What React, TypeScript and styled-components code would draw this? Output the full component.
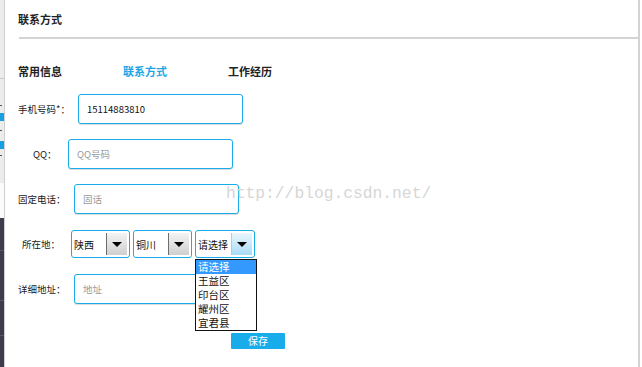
import styled, { createGlobalStyle } from "styled-components";

const GlobalStyle = createGlobalStyle`
  html, body {
    margin: 0;
    padding: 0;
    background: #ffffff;
  }
  body {
    font-family: "Noto Sans CJK SC", "Noto Sans", sans-serif;
    color: #222;
  }
`;

const Page = styled.div`
  width: 642px;
  height: 367px;
  display: flex;
  overflow: hidden;
  position: relative;
`;

const SideStrip = styled.div`
  width: 4px;
  display: flex;
  flex-direction: column;
  border-right: 1px solid #cfcfcf;
  overflow: hidden;
`;

const StripPart = styled.div<{ $h: number; $bg: string }>`
  height: ${p => p.$h}px;
  flex: none;
  background: ${p => p.$bg};
  position: relative;
`;

const StripMark = styled.div<{ $top: number; $blue?: boolean }>`
  position: absolute;
  left: 0;
  top: ${p => p.$top}px;
  width: ${p => (p.$blue ? 4 : 2)}px;
  height: ${p => (p.$blue ? 8 : 1)}px;
  background: ${p => (p.$blue ? "#1a9fe0" : "#555")};
`;

const StripLine = styled.div<{ $top: number; $c: string }>`
  position: absolute;
  left: 0;
  right: 0;
  top: ${p => p.$top}px;
  height: 1px;
  background: ${p => p.$c};
`;

const Main = styled.div`
  flex: 1;
  border-right: 2px solid #d3d3d3;
  margin-right: 2px;
  position: relative;
`;

const Header = styled.div`
  height: 37px;
  margin-left: 14px;
  border-bottom: 2px solid #d3d3d3;
  display: flex;
  align-items: center;
`;

const Title = styled.h1`
  margin: 0 0 0 -1px;
  font-size: 11px;
  font-weight: 700;
  color: #222;
`;

const Tabs = styled.div`
  display: flex;
  padding: 24px 0 0 13px;
  height: 16px;
  align-items: center;
`;

const Tab = styled.div<{ $active?: boolean }>`
  width: 105px;
  font-size: 11px;
  font-weight: 700;
  color: ${p => (p.$active ? "#1ca5e6" : "#222")};
`;

const Form = styled.div`
  display: flex;
  flex-direction: column;
  gap: 15px;
  padding-top: 15px;
`;

const Row = styled.div<{ $indent: number }>`
  height: 30px;
  display: flex;
  align-items: center;
  padding-left: ${p => p.$indent}px;
`;

const Label = styled.label<{ $w: number }>`
  width: ${p => p.$w}px;
  flex: none;
  font-size: 9.5px;
  color: #1a1a1a;
  white-space: nowrap;
  overflow: hidden;
`;

const Input = styled.input`
  width: 165px;
  height: 30px;
  box-sizing: border-box;
  border: 1px solid #18ade9;
  border-radius: 3px;
  box-shadow: 0 1px 1px rgba(0, 0, 0, 0.15);
  padding: 0 0 0 8px;
  font-family: "Noto Sans CJK SC", "Noto Sans", sans-serif;
  font-size: 9.5px;
  color: #111;
  outline: none;
  &::placeholder {
    color: #9a9a9a;
  }
`;

const Selects = styled.div`
  display: flex;
  gap: 3px;
`;

const SelectBox = styled.div<{ $w: number }>`
  position: relative;
  width: ${p => p.$w}px;
  height: 28px;
  box-sizing: border-box;
  border: 1px solid #18ade9;
  border-radius: 3px;
  display: flex;
  padding: 2px 2px 2px 1px;
  background: #fff;
`;

const SelectText = styled.div`
  flex: 1;
  min-width: 0;
  font-size: 10px;
  color: #111;
  display: flex;
  align-items: center;
  white-space: nowrap;
  overflow: hidden;
  padding-left: 1px;
`;

const SelectButton = styled.div<{ $hot?: boolean }>`
  width: 20px;
  flex: none;
  border-left: 1px solid ${p => (p.$hot ? "#9fd3ef" : "#6e6e6e")};
  background: ${p =>
    p.$hot
      ? "linear-gradient(#eaf6fd, #a9dbf6)"
      : "linear-gradient(#f4f4f4, #cfcfcf)"};
  display: flex;
  align-items: center;
  justify-content: center;
`;

const Arrow = styled.div`
  width: 0;
  height: 0;
  border-left: 5px solid transparent;
  border-right: 5px solid transparent;
  border-top: 5px solid #000;
`;

const DropList = styled.ul`
  position: absolute;
  left: -1px;
  top: 28px;
  width: 60px;
  margin: 0;
  padding: 0;
  list-style: none;
  border: 1px solid #111;
  background: #fff;
  z-index: 5;
`;

const DropItem = styled.li<{ $selected?: boolean }>`
  height: 14px;
  line-height: 14px;
  font-size: 10.5px;
  padding-left: 2px;
  color: ${p => (p.$selected ? "#fff" : "#111")};
  background: ${p => (p.$selected ? "#3399ff" : "transparent")};
`;

const Actions = styled.div`
  display: flex;
  padding: 29px 0 0 226px;
`;

const SaveButton = styled.button`
  width: 54px;
  height: 16px;
  border: none;
  border-radius: 1px;
  background: #19acea;
  color: #fff;
  font-family: "Noto Sans CJK SC", sans-serif;
  font-size: 10px;
  padding: 0;
  line-height: 16px;
`;

const Watermark = styled.div`
  position: absolute;
  left: 221px;
  top: 184px;
  font-family: "Liberation Mono", monospace;
  font-size: 16.3px;
  color: #d6d6d6;
  pointer-events: none;
  z-index: 1;
`;

const selects = [
  { value: "陕西", w: 59 },
  { value: "铜川", w: 59 },
  { value: "请选择", w: 60, hot: true, open: true },
];

const districts = ["请选择", "王益区", "印台区", "耀州区", "宜君县"];

export default function App() {
  return (
    <Page>
      <GlobalStyle />
      <SideStrip>
        <StripPart $h={183} $bg="#ececec">
          <StripLine $top={78} $c="#c9c9c9" />
          <StripMark $top={105} />
          <StripMark $top={113} $blue />
          <StripMark $top={130} />
          <StripMark $top={141} $blue />
          <StripMark $top={155} />
        </StripPart>
        <StripPart $h={35} $bg="#fbfbfb" />
        <StripPart $h={149} $bg="#3f3b4c">
          <StripLine $top={32} $c="#5a5668" />
          <StripLine $top={82} $c="#5a5668" />
          <StripLine $top={117} $c="#5a5668" />
        </StripPart>
      </SideStrip>
      <Main>
        <Header>
          <Title>联系方式</Title>
        </Header>
        <Tabs>
          <Tab>常用信息</Tab>
          <Tab $active>联系方式</Tab>
          <Tab>工作经历</Tab>
        </Tabs>
        <Form>
          <Row $indent={13}>
            <Label $w={60}>手机号码*：</Label>
            <Input defaultValue="15114883810" />
          </Row>
          <Row $indent={28}>
            <Label $w={35}>QQ：</Label>
            <Input placeholder="QQ号码" />
          </Row>
          <Row $indent={13}>
            <Label $w={56}>固定电话：</Label>
            <Input placeholder="固话" />
          </Row>
          <Row $indent={17}>
            <Label $w={49}>所在地：</Label>
            <Selects>
              {selects.map((s, i) => (
                <SelectBox key={i} $w={s.w}>
                  <SelectText>{s.value}</SelectText>
                  <SelectButton $hot={s.hot}>
                    <Arrow />
                  </SelectButton>
                  {s.open && (
                    <DropList>
                      {districts.map((d, j) => (
                        <DropItem key={d} $selected={j === 0}>
                          {d}
                        </DropItem>
                      ))}
                    </DropList>
                  )}
                </SelectBox>
              ))}
            </Selects>
          </Row>
          <Row $indent={13}>
            <Label $w={56}>详细地址：</Label>
            <Input placeholder="地址" />
          </Row>
        </Form>
        <Actions>
          <SaveButton>保存</SaveButton>
        </Actions>
        <Watermark>http://blog.csdn.net/</Watermark>
      </Main>
    </Page>
  );
}
